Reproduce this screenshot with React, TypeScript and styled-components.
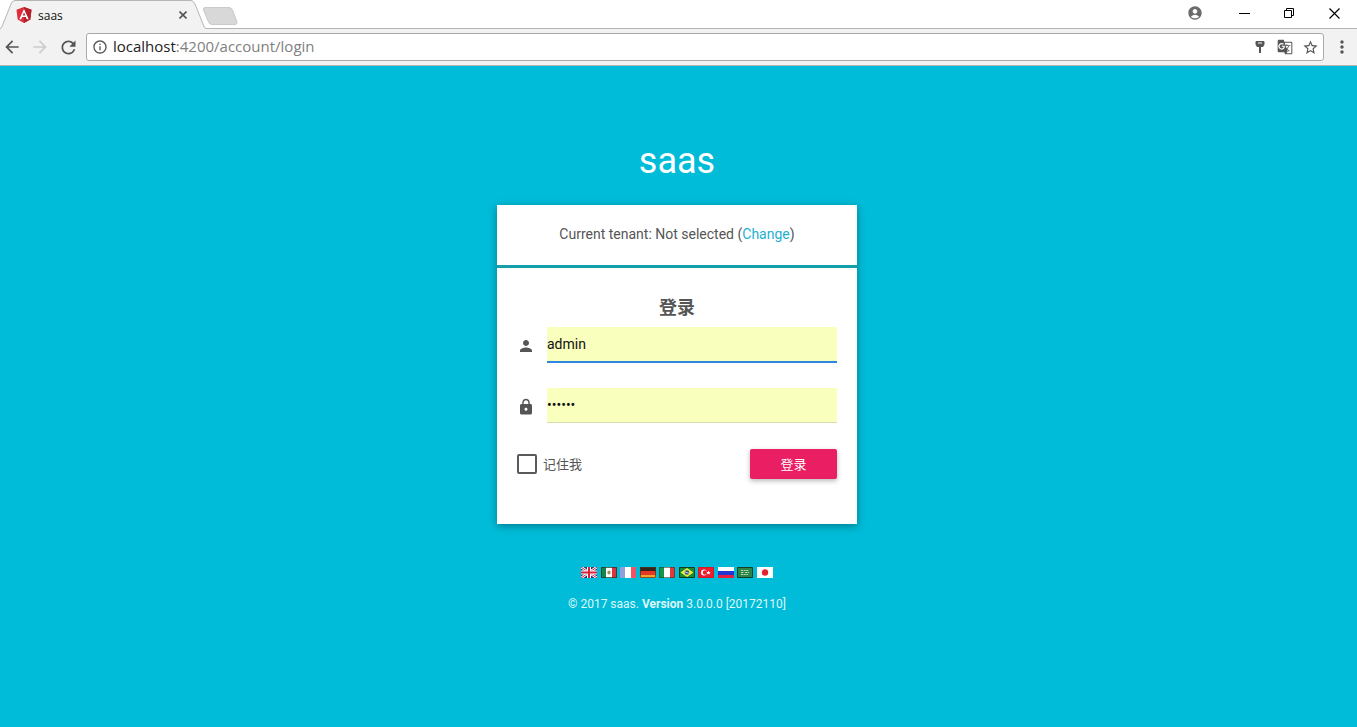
import React from "react";
import styled, { createGlobalStyle } from "styled-components";
import {
  MdAccountCircle,
  MdArrowBack,
  MdArrowForward,
  MdGTranslate,
  MdInfoOutline,
  MdLock,
  MdMoreVert,
  MdPerson,
  MdRefresh,
  MdStarBorder,
} from "react-icons/md";

const GlobalStyle = createGlobalStyle`
  *, *::before, *::after { box-sizing: border-box; }
  body {
    margin: 0;
    background: #00bcd8;
    color: #555;
    font-family: Roboto, "Noto Sans CJK SC", sans-serif;
    font-size: 14px;
  }
  button, input { font-family: inherit; }
  svg { display: block; flex: none; }
`;

const Window = styled.div`
  display: flex;
  flex-direction: column;
  min-height: 100vh;
`;

const TabStrip = styled.div`
  display: flex;
  align-items: flex-start;
  height: 29px;
  background: #fff;
  border-bottom: 1px solid #b5b5b5;
`;

const Tab = styled.div`
  position: relative;
  display: flex;
  align-items: center;
  width: 206px;
  height: 29px;
  padding: 0 17px 0 16px;
  color: #111;
  font: 12px "Open Sans", "Noto Sans", sans-serif;
`;

const TabOutline = styled.svg`
  position: absolute;
  left: 0;
  top: 0;
`;

const TabContent = styled.div`
  position: relative;
  display: flex;
  flex: 1;
  align-items: center;
  gap: 6px;
  padding-top: 1px;
`;

const TabTitle = styled.span`
  flex: 1;
`;

const PlainButton = styled.button<{ $width?: number; $color?: string }>`
  display: flex;
  align-items: center;
  justify-content: center;
  flex: none;
  width: ${(p) => p.$width ?? 24}px;
  height: 24px;
  padding: 0;
  border: 0;
  background: none;
  color: ${(p) => p.$color ?? "#555"};
`;

const NewTab = styled(PlainButton)`
  margin: 4px auto 0 -4px;
`;

const WindowControls = styled.div`
  display: flex;
  align-items: center;
  padding-top: 1px;
`;

const Profile = styled(PlainButton)`
  margin-right: 15px;
`;

const Toolbar = styled.nav`
  display: flex;
  align-items: center;
  gap: 4px;
  height: 37px;
  padding-right: 3px;
  background: #f2f2f2;
  border-bottom: 1px solid #b5b5b5;
`;

const AddressBar = styled.div`
  display: flex;
  flex: 1;
  align-items: center;
  height: 28px;
  margin: 0 2px;
  padding: 0 3px 0 5px;
  border: 1px solid #aaa;
  border-radius: 3px;
  background: #fff;
  color: #555;
`;

const Address = styled.div`
  flex: 1;
  padding: 0 0 2px 5px;
  color: #808080;
  font: 15px "Open Sans", "Noto Sans", sans-serif;
`;

const Host = styled.span`
  color: #222;
`;

const AddressActions = styled.div`
  display: flex;
  gap: 5px;
`;

const Page = styled.main`
  display: flex;
  flex: 1;
  flex-direction: column;
  align-items: center;
  padding: 71px 3px 40px 0;
`;

const Logo = styled.h1`
  margin: 0 0 20px;
  color: #fff;
  font-size: 36px;
  font-weight: 400;
  line-height: 48px;
`;

const Card = styled.section`
  width: 360px;
  max-width: 100%;
  background: #fff;
  box-shadow: 0 2px 8px rgba(0, 0, 0, 0.35);
`;

const Tenant = styled.div`
  height: 63px;
  border-bottom: 3px solid #159fa9;
  line-height: 58px;
  text-align: center;
`;

const Link = styled.a`
  color: #26b0cf;
  text-decoration: none;
`;

const Form = styled.form`
  display: flex;
  flex-direction: column;
  padding: 27px 20px 45px;
`;

const Heading = styled.h2`
  margin: 0 0 6px;
  font-size: 18px;
  font-weight: 700;
  line-height: 26px;
  text-align: center;
`;

const Field = styled.label`
  display: flex;
  align-items: center;
  gap: 12px;
  margin-bottom: 25px;
`;

const FieldIcon = styled.span`
  padding-top: 2px;
`;

const TextInput = styled.input<{ $active?: boolean }>`
  flex: 1;
  min-width: 0;
  height: ${(p) => (p.$active ? 36 : 35)}px;
  padding: 0;
  border: 0;
  border-bottom: ${(p) => (p.$active ? "2px solid #2f86dc" : "1px solid #d8ddb0")};
  outline: 0;
  background: #f9ffbd;
  color: #111;
  font-size: 14px;
`;

const Actions = styled.div`
  display: flex;
  align-items: center;
  justify-content: space-between;
  padding-top: 1px;
`;

const Remember = styled.label`
  display: flex;
  align-items: center;
  gap: 6px;
  font-size: 13px;
`;

const RememberText = styled.span`
  padding-bottom: 2px;
`;

const Checkbox = styled.input`
  width: 20px;
  height: 20px;
  margin: 0;
  appearance: none;
  border: 2px solid #5a5a5a;
  border-radius: 2px;
`;

const Submit = styled.button`
  width: 87px;
  height: 30px;
  padding: 0 0 2px;
  border: 0;
  border-radius: 2px;
  background: #e91e63;
  box-shadow: 0 2px 5px rgba(0, 0, 0, 0.28);
  color: #fff;
  font-size: 13px;
`;

const Languages = styled.div`
  display: flex;
  justify-content: space-between;
  width: 192px;
  margin: 43px 0 18px;
`;

const Language = styled.a`
  display: block;
`;

const Copyright = styled.footer`
  color: #dff7fa;
  font-size: 12px;
  line-height: 16px;
`;

const flags: { name: string; art: React.ReactNode }[] = [
  {
    name: "English",
    art: (
      <>
        <path fill="#26337a" d="M0 0h16v11H0z" />
        <path stroke="#fff" strokeWidth="2.6" d="M0 0l16 11M16 0L0 11" />
        <path stroke="#d8213b" d="M0 0l16 11M16 0L0 11" />
        <path stroke="#fff" strokeWidth="4" d="M8 0v11M0 5.500h16" />
        <path stroke="#d8213b" strokeWidth="2" d="M8 0v11M0 5.500h16" />
      </>
    ),
  },
  {
    name: "Español",
    art: (
      <>
        <path fill="#fff" d="M0 0h16v11H0z" />
        <path fill="#13864b" d="M0 0h5v11H0z" />
        <path fill="#d9343f" d="M11 0h5v11h-5z" />
        <ellipse cx="8" cy="5.500" rx="1.600" ry="2" fill="#a58a58" />
        <path fill="none" stroke="#263526" strokeOpacity=".75" d="M.5.5h15v10H.5z" />
      </>
    ),
  },
  {
    name: "Français",
    art: (
      <>
        <path fill="#fff" d="M0 0h16v11H0z" />
        <path fill="#8fa0dc" d="M0 0h5v11H0z" />
        <path fill="#f05363" d="M11 0h5v11h-5z" />
      </>
    ),
  },
  {
    name: "Deutsch",
    art: (
      <>
        <path fill="#33231b" d="M0 0h16v4H0z" />
        <path fill="#e23824" d="M0 4h16v4H0z" />
        <path fill="#f2a52c" d="M0 8h16v3H0z" />
        <path fill="none" stroke="#51351d" strokeOpacity=".7" d="M.5.5h15v10H.5z" />
      </>
    ),
  },
  {
    name: "Italiano",
    art: (
      <>
        <path fill="#fff" d="M0 0h16v11H0z" />
        <path fill="#159447" d="M0 0h5v11H0z" />
        <path fill="#e03a3d" d="M11 0h5v11h-5z" />
        <path fill="none" stroke="#29412d" strokeOpacity=".6" d="M.5.5h15v10H.5z" />
      </>
    ),
  },
  {
    name: "Português",
    art: (
      <>
        <path fill="#178a32" d="M0 0h16v11H0z" />
        <path fill="#f4e83b" d="M8 1l6.500 4.500L8 10 1.500 5.500z" />
        <circle cx="8" cy="5.500" r="2.300" fill="#28589b" />
        <path stroke="#fff" strokeWidth=".7" d="M6 5l4 1.200" />
        <path fill="none" stroke="#123d1b" d="M.5.5h15v10H.5z" />
      </>
    ),
  },
  {
    name: "Türkçe",
    art: (
      <>
        <path fill="#ed1c2e" d="M0 0h16v11H0z" />
        <circle cx="6" cy="5.500" r="3" fill="#fff" />
        <circle cx="7" cy="5.500" r="2.200" fill="#ed1c2e" />
        <path fill="#fff" d="M10.500 3.500l.6 1.400 1.600.2-1.200 1 .4 1.500-1.400-.8-1.400.8.4-1.500-1.200-1 1.600-.2z" />
        <path fill="none" stroke="#d01c28" d="M.5.5h15v10H.5z" />
      </>
    ),
  },
  {
    name: "Русский",
    art: (
      <>
        <path fill="#fff" d="M0 0h16v4H0z" />
        <path fill="#2436d2" d="M0 4h16v4H0z" />
        <path fill="#e5203f" d="M0 8h16v3H0z" />
      </>
    ),
  },
  {
    name: "العربية",
    art: (
      <>
        <path fill="#2c8446" d="M0 0h16v11H0z" />
        <path stroke="#b4d8b6" d="M4 3.500h8M4 5.500h3M8 5.500h4M4 7.500h7" strokeDasharray="2 .6" />
        <path fill="none" stroke="#173e25" d="M.5.5h15v10H.5z" />
      </>
    ),
  },
  {
    name: "日本語",
    art: (
      <>
        <path fill="#fff" d="M0 0h16v11H0z" />
        <circle cx="8" cy="5.500" r="3.200" fill="#e8202c" />
      </>
    ),
  },
];

export default function App() {
  return (
    <Window>
      <GlobalStyle />
      <TabStrip>
        <Tab>
          <TabOutline width="206" height="29" aria-hidden="true">
            <path d="M0 29C2 28 2 26 3 24L11 4Q12 .5 15 .5H191Q193 .5 195 4L203 24Q204 28 206 29Z" fill="#f2f2f2" />
            <path d="M0 28.500C2 28 2 26 3 24L11 4Q12 .5 15 .5H191Q193 .5 195 4L203 24Q204 28 206 28.500" fill="none" stroke="#b5b5b5" />
          </TabOutline>
          <TabContent>
            <svg width="16" height="16" viewBox="0 0 16 16" aria-hidden="true">
              <path fill="#dd2c3b" d="M8 0l7.500 2.700-1.200 9.800L8 16l-6.300-3.500L.5 2.700z" />
              <path fill="#b5202d" d="M8 0l7.500 2.700-1.200 9.800L8 16z" />
              <path fill="#fff" fillRule="evenodd" d="M8 1.900l4.700 10.400h-1.900l-1-2.300H6.200l-1 2.300H3.300zM8 5.300L6.700 8.500h2.600z" />
            </svg>
            <TabTitle>saas</TabTitle>
            <PlainButton $width={12} aria-label="Close tab">
              <svg width="8" height="8" viewBox="0 0 8 8">
                <path d="M.5.5l7 7M7.500.5l-7 7" stroke="#555" strokeWidth="1.600" />
              </svg>
            </PlainButton>
          </TabContent>
        </Tab>
        <NewTab $width={36} aria-label="New tab">
          <svg width="36" height="18" viewBox="0 0 36 18">
            <path d="M3 .5H27Q29.500.5 30.500 3L35 15Q35.500 17.500 33 17.500H10Q7.500 17.500 6.500 15L1.500 3Q1 .5 3 .5z" fill="#d8d8d8" stroke="#cacaca" />
          </svg>
        </NewTab>
        <WindowControls>
          <Profile aria-label="Profile" $color="#6b6b6b">
            <MdAccountCircle size={16} />
          </Profile>
          <PlainButton $width={45} aria-label="Minimize">
            <svg width="11" height="11"><path d="M0 5.500h11" stroke="#000" /></svg>
          </PlainButton>
          <PlainButton $width={45} aria-label="Restore">
            <svg width="11" height="11" fill="none" stroke="#000">
              <path d="M.5 2.500h7v7h-7zM2.500 2.500v-2h7v7h-2" />
            </svg>
          </PlainButton>
          <PlainButton $width={45} aria-label="Close window">
            <svg width="11" height="11"><path d="M.5.5l10 10M10.500.5l-10 10" stroke="#000" strokeWidth="1.200" /></svg>
          </PlainButton>
        </WindowControls>
      </TabStrip>

      <Toolbar aria-label="Browser">
        <PlainButton aria-label="Back"><MdArrowBack size={20} /></PlainButton>
        <PlainButton aria-label="Forward" $color="#ccc"><MdArrowForward size={20} /></PlainButton>
        <PlainButton aria-label="Reload"><MdRefresh size={21} /></PlainButton>
        <AddressBar>
          <MdInfoOutline size={16} />
          <Address role="textbox" aria-label="Address" tabIndex={0}>
            <Host>localhost</Host>:4200/account/login
          </Address>
          <AddressActions>
            <PlainButton $width={20} aria-label="Saved passwords">
              <svg width="10" height="14" viewBox="0 0 10 14">
                <path fill="#555" fillRule="evenodd" d="M1.500 1h7Q9.500 1 9.500 2v2.500L8 7H6v6H4V7H2L.5 4.500V2Q.5 1 1.500 1zM3 2.500v1h4v-1z" />
              </svg>
            </PlainButton>
            <PlainButton $width={20} aria-label="Translate"><MdGTranslate size={16} /></PlainButton>
            <PlainButton $width={20} aria-label="Bookmark"><MdStarBorder size={17} /></PlainButton>
          </AddressActions>
        </AddressBar>
        <PlainButton aria-label="Menu"><MdMoreVert size={20} /></PlainButton>
      </Toolbar>

      <Page>
        <Logo>saas</Logo>
        <Card>
          <Tenant>
            Current tenant: Not selected (<Link href="#tenant">Change</Link>)
          </Tenant>
          <Form onSubmit={(e) => e.preventDefault()}>
            <Heading>登录</Heading>
            <Field>
              <FieldIcon><MdPerson size={18} /></FieldIcon>
              <TextInput $active aria-label="User name" defaultValue="admin" />
            </Field>
            <Field>
              <FieldIcon><MdLock size={18} /></FieldIcon>
              <TextInput type="password" aria-label="Password" defaultValue="123qwe" />
            </Field>
            <Actions>
              <Remember>
                <Checkbox type="checkbox" />
                <RememberText>记住我</RememberText>
              </Remember>
              <Submit type="submit">登录</Submit>
            </Actions>
          </Form>
        </Card>
        <Languages>
          {flags.map((flag) => (
            <Language key={flag.name} href="#language" aria-label={flag.name}>
              <svg width="16" height="11" viewBox="0 0 16 11">{flag.art}</svg>
            </Language>
          ))}
        </Languages>
        <Copyright>
          © 2017 saas. <b>Version</b> 3.0.0.0 [20172110]
        </Copyright>
      </Page>
    </Window>
  );
}
